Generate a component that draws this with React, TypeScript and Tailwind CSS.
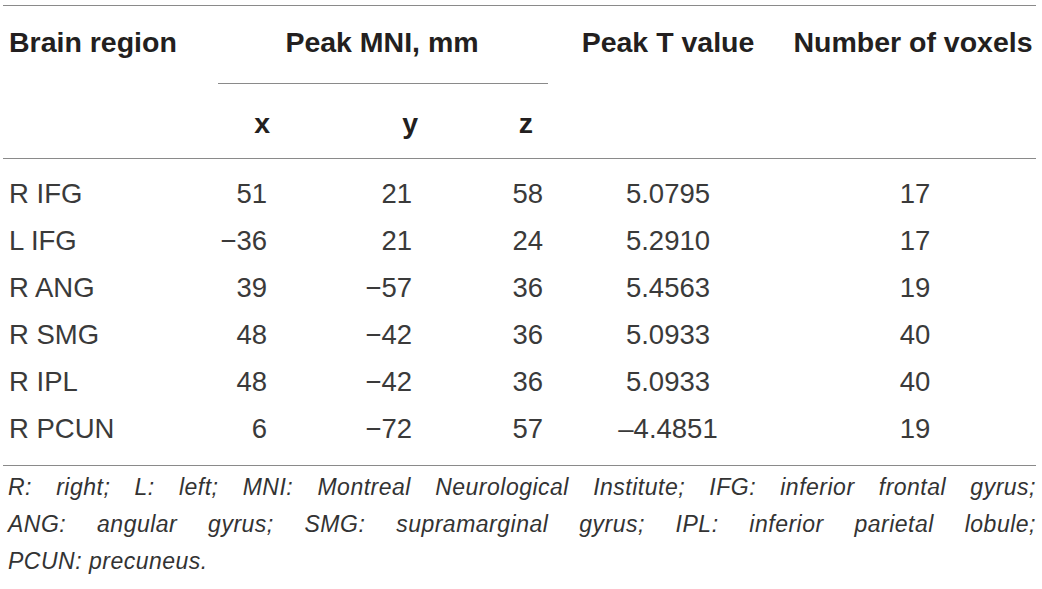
const rows = [
  { region: 'R IFG', x: '51', y: '21', z: '58', t: '5.0795', n: '17' },
  { region: 'L IFG', x: '\u221236', y: '21', z: '24', t: '5.2910', n: '17' },
  { region: 'R ANG', x: '39', y: '\u221257', z: '36', t: '5.4563', n: '19' },
  { region: 'R SMG', x: '48', y: '\u221242', z: '36', t: '5.0933', n: '40' },
  { region: 'R IPL', x: '48', y: '\u221242', z: '36', t: '5.0933', n: '40' },
  { region: 'R PCUN', x: '6', y: '\u221272', z: '57', t: '\u20134.4851', n: '19' },
];

const cols = 'grid grid-cols-[215px_72px_130px_128px_240px_248px]';

export default function App() {
  return (
    <div className="w-[1042px] h-[589px] bg-white overflow-hidden font-['Liberation_Sans',Arial,sans-serif]">
      <div className="ml-[3px] w-[1033px] pt-[5px]">
        {/* header */}
        <div className="border-t-[1.5px] border-b-[1.5px] border-[#8a8a8a] text-[28.5px] leading-[28px] font-bold text-[#231f20]">
          <div className={cols}>
            <div className="row-span-2 pl-[6px] pt-[22px]">Brain region</div>
            <div className="col-span-3 h-[78px] border-b-[1.5px] border-[#8a8a8a] pt-[22px] text-center pr-[2px]">
              Peak MNI, mm
            </div>
            <div className="row-span-2 pt-[22px] text-center">Peak T value</div>
            <div className="row-span-2 pt-[22px] text-center pl-[2px]">Number of voxels</div>
            <div className="h-[74px] pt-[25px] text-right pr-[20px]">x</div>
            <div className="pt-[25px] text-right pr-[2px]">y</div>
            <div className="pt-[25px] text-right pr-[15px]">z</div>
          </div>
        </div>

        {/* body */}
        <div className="border-b-[1.5px] border-[#8a8a8a] pb-[24px] text-[27.5px] leading-[28px] text-[#3a3a3a]">
          {rows.map((r) => (
            <div key={r.region} className={`${cols} h-[47px] pt-[21px]`}>
              <div className="pl-[6px]">{r.region}</div>
              <div className="text-right pr-[23px]">{r.x}</div>
              <div className="text-right pr-[8px]">{r.y}</div>
              <div className="text-right pr-[5px]">{r.z}</div>
              <div className="text-center">{r.t}</div>
              <div className="text-center pl-[6px]">{r.n}</div>
            </div>
          ))}
        </div>

        {/* footnote */}
        <div className="pt-[3px] pl-[5px] text-[23px] leading-[37px] italic tracking-[0.5px] text-[#333333]">
          <div className="text-justify [text-align-last:justify]">
            R: right; L: left; MNI: Montreal Neurological Institute; IFG: inferior frontal gyrus;
          </div>
          <div className="text-justify [text-align-last:justify]">
            ANG: angular gyrus; SMG: supramarginal gyrus; IPL: inferior parietal lobule;
          </div>
          <div>PCUN: precuneus.</div>
        </div>
      </div>
    </div>
  );
}
